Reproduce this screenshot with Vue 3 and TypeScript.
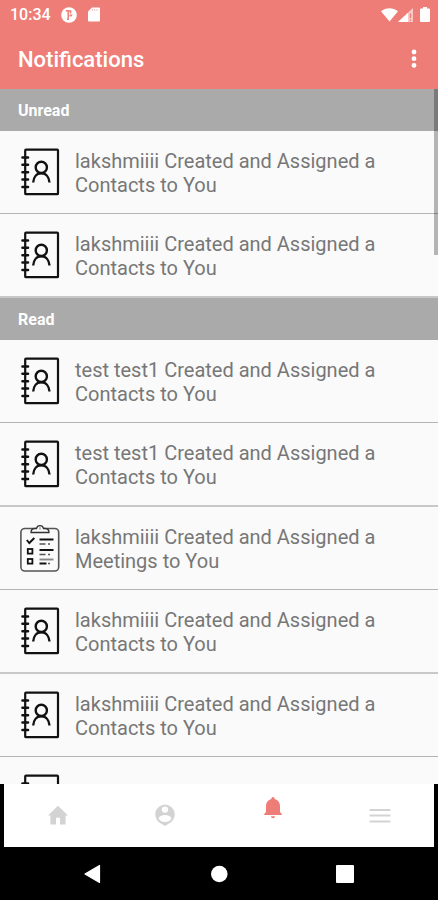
<script setup lang="ts">
type Kind = 'Contacts' | 'Meetings'

interface Notice {
  id: number
  kind: Kind
  author?: string
}

interface Section {
  title: string
  items: Notice[]
}

const sections: Section[] = [
  {
    title: 'Unread',
    items: [
      { id: 1, author: 'lakshmiiii', kind: 'Contacts' },
      { id: 2, author: 'lakshmiiii', kind: 'Contacts' },
    ],
  },
  {
    title: 'Read',
    items: [
      { id: 3, author: 'test test1', kind: 'Contacts' },
      { id: 4, author: 'test test1', kind: 'Contacts' },
      { id: 5, author: 'lakshmiiii', kind: 'Meetings' },
      { id: 6, author: 'lakshmiiii', kind: 'Contacts' },
      { id: 7, author: 'lakshmiiii', kind: 'Contacts' },
      { id: 8, kind: 'Contacts' },
    ],
  },
]
</script>

<template>
  <div class="screen">
    <header class="top">
      <div class="status">
        <span class="clock">10:34</span>
        <svg class="status-app" width="16" height="16" viewBox="0 0 16 16" aria-hidden="true">
          <circle cx="8" cy="8" r="7.800" fill="#fff" />
          <path d="M4.800 3.800h2.400v8.400H6M7 4h2.600v2.500" fill="none" stroke="#ee7d77" stroke-width="1.500" />
          <path d="M8.500 7.500h3.200l-1.200 2h-2z" fill="#ee7d77" />
        </svg>
        <svg class="status-card" width="12" height="15" viewBox="0 0 12 15" aria-hidden="true">
          <path d="M4 0.500h7a1 1 0 0 1 1 1v12a1 1 0 0 1-1 1H1a1 1 0 0 1-1-1V4.500z" fill="#fff" />
          <path d="M4.500 2v2M6.800 2v2M9 2v2" stroke="#f7c4c0" stroke-width="1" />
        </svg>
        <span class="spacer"></span>
        <svg width="17" height="14" viewBox="0 0 17 14" aria-hidden="true">
          <path d="M8.500 13.500 0 3.200C5-.9 12-.9 17 3.200z" fill="#fff" />
        </svg>
        <svg width="15" height="14" viewBox="0 0 15 14" aria-hidden="true">
          <path d="M15 0v14H0z" fill="#f8c9c6" />
          <path d="M10 4.700V14H0z" fill="#fff" />
          <path d="M12.500 5.500v4.500M12.500 11.500v1.500" stroke="#ee7d77" stroke-width="1.300" />
        </svg>
        <svg class="battery" width="10" height="15" viewBox="0 0 10 15" aria-hidden="true">
          <path d="M3 0h4v1.500h2a1 1 0 0 1 1 1V14a1 1 0 0 1-1 1H1a1 1 0 0 1-1-1V2.500a1 1 0 0 1 1-1h2z" fill="#fff" />
        </svg>
      </div>
      <div class="toolbar">
        <h1>Notifications</h1>
        <button type="button" class="more" aria-label="More options">
          <svg width="6" height="20" viewBox="0 0 6 20" aria-hidden="true">
            <circle cx="3" cy="3" r="2.400" />
            <circle cx="3" cy="9.700" r="2.400" />
            <circle cx="3" cy="16.400" r="2.400" />
          </svg>
        </button>
      </div>
    </header>

    <main class="feed">
      <section v-for="section in sections" :key="section.title">
        <h2>{{ section.title }}</h2>
        <ul>
          <li v-for="item in section.items" :key="item.id">
            <svg v-if="item.kind === 'Contacts'" class="kind" width="40" height="48" viewBox="0 0 40 48" aria-hidden="true">
              <g fill="none" stroke="#111">
                <rect x="5.200" y="1.700" width="32.800" height="44.500" rx="0.800" stroke-width="2.200" />
                <path d="M2.500 9.500H8M2.500 16.800H8M2.500 24.200H8M2.500 31.500H8M2.500 39H8" stroke-width="2.600" stroke-linecap="round" />
                <circle cx="21.300" cy="19.400" r="5.600" stroke-width="2.400" />
                <path d="M13.200 34.500c.3-5.300 3.300-9.200 8.100-9.200s7.800 3.900 8.200 9.200" stroke-width="2.400" />
              </g>
            </svg>
            <svg v-else class="kind" width="40" height="48" viewBox="0 0 40 48" aria-hidden="true">
              <rect x="0.900" y="4.500" width="37.800" height="42.500" rx="4" fill="none" stroke="#555" stroke-width="1.600" />
              <path d="M11 8.500c0-3 1-4 4-4h1.500c.8-3.800 6.200-3.800 7 0H25c3 0 4 1 4 4z" fill="#fafafa" stroke="#333" stroke-width="1.300" />
              <path d="M20 3.200v2.500" stroke="#777" stroke-width="1" />
              <g fill="none" stroke="#111">
                <path d="M6.800 16l2.500 3 5-5" stroke-width="1.900" />
                <rect x="7.800" y="25" width="4.600" height="4.600" stroke-width="1.800" />
                <rect x="7.800" y="35" width="4.600" height="4.600" stroke-width="1.800" />
                <path d="M19.500 15.500h14M19.500 26h14M19.500 39.500h7" stroke-width="1.900" />
              </g>
              <path d="M19.500 20h6M28 20h2M19.500 30.500h6M28 30.500h2M28 39.500h2" stroke="#555" stroke-width="1.300" />
              <path d="M19.500 35.500h14" stroke="#888" stroke-width="1.900" />
            </svg>
            <p v-if="item.author">{{ item.author }} Created and Assigned a {{ item.kind }} to You</p>
          </li>
        </ul>
      </section>
      <div class="thumb" aria-hidden="true"></div>
    </main>

    <nav class="tabs" aria-label="Main">
      <button type="button" aria-label="Home">
        <svg width="24" height="24" viewBox="0 0 24 24" aria-hidden="true">
          <path d="M10 20.500v-6.700h4v6.700h5.600v-9H22L12 1.700 2 11.500h2.400v9z" />
        </svg>
      </button>
      <button type="button" aria-label="Profile">
        <svg width="24" height="24" viewBox="0 0 24 24" aria-hidden="true">
          <path d="M12 0.500a10 10 0 0 0-3.200 19.400L12 22l3.200-2.100A10 10 0 0 0 12 0.500z" />
          <circle cx="12" cy="5.600" r="3.200" fill="#fff" />
          <path d="M5.500 14.500c1-2.700 4-3.500 6.500-3.500s5.500.8 6.500 3.500C17.200 17 14.700 18 12 18s-5.200-1-6.500-3.500z" fill="#fff" />
        </svg>
      </button>
      <button type="button" class="active" aria-label="Notifications" aria-current="page">
        <svg width="24" height="24" viewBox="0 0 24 24" aria-hidden="true">
          <path d="M12 1a1.700 1.700 0 0 0-1.700 1.700v.4C7 4 5 6.700 5 10v6l-1.800 2v1h17.600v-1L19 16v-6c0-3.300-2-6-5.300-6.900v-.4A1.700 1.700 0 0 0 12 1zM10 20.300h4a2 2 0 0 1-4 0z" />
        </svg>
      </button>
      <button type="button" aria-label="Menu">
        <svg width="24" height="24" viewBox="0 0 24 24" aria-hidden="true">
          <path d="M1.500 5h21v2h-21zM1.500 10.500h21v2h-21zM1.500 16.500h21v2h-21z" />
        </svg>
      </button>
    </nav>

    <div class="system">
      <button type="button" aria-label="Back">
        <svg width="18" height="20" viewBox="0 0 18 20" aria-hidden="true"><path d="M15.500 1.500v17L1 10z" stroke="#fff" stroke-width="1.200" stroke-linejoin="round" /></svg>
      </button>
      <button type="button" aria-label="Home screen">
        <svg width="18" height="18" viewBox="0 0 18 18" aria-hidden="true"><circle cx="9.300" cy="9" r="8.300" /></svg>
      </button>
      <button type="button" aria-label="Recent apps">
        <svg width="18" height="18" viewBox="0 0 18 18" aria-hidden="true"><rect width="18" height="18" rx="1" /></svg>
      </button>
    </div>
  </div>
</template>

<style>
body {
  margin: 0;
  background: #000;
}
</style>

<style scoped>
.screen {
  display: flex;
  flex-direction: column;
  height: 100vh;
  font-family: Roboto, "Liberation Sans", sans-serif;
  background: #000;
}

h1,
h2,
p,
ul {
  margin: 0;
  padding: 0;
}

button {
  display: flex;
  align-items: center;
  justify-content: center;
  padding: 0;
  border: 0;
  background: none;
}

.top {
  color: #fff;
  background: #ee7d77;
}

.status {
  display: flex;
  align-items: center;
  height: 29px;
  padding: 0 8px 0 10px;
}

.clock {
  font-size: 16px;
  font-weight: 500;
}

.status-app {
  margin-left: 10px;
}

.status-card {
  margin-left: 11px;
}

.spacer {
  flex: 1;
}

.battery {
  margin-left: 7px;
}

.toolbar {
  display: flex;
  align-items: center;
  justify-content: space-between;
  height: 60px;
  padding: 0 12px 0 18px;
}

h1 {
  font-size: 22px;
  font-weight: 500;
}

.more {
  width: 24px;
  height: 40px;
  fill: #fff;
}

.feed {
  position: relative;
  flex: 1;
  min-height: 0;
  overflow: hidden;
  background: #fafafa;
}

h2 {
  padding: 2px 18px 0;
  font-size: 16px;
  font-weight: 700;
  line-height: 40px;
  color: #fff;
  background: #aaa;
}

ul {
  list-style: none;
}

li {
  display: flex;
  align-items: center;
  gap: 15px;
  min-height: 82px;
  padding: 0 40px 0 20px;
  border-bottom: 1px solid #b4b4b4;
}

li:nth-child(even) {
  border-bottom: 2px solid #c8c8c8;
}

.kind {
  flex: none;
}

p {
  padding-top: 2px;
  font-size: 20px;
  font-weight: 400;
  line-height: 24px;
  color: #777;
}

.thumb {
  position: absolute;
  top: 0;
  right: 0;
  width: 4px;
  height: 166px;
  background: rgba(0, 0, 0, 0.28);
}

.tabs {
  display: grid;
  grid-template-columns: repeat(4, 1fr);
  height: 63px;
  margin: 0 4px;
  background: #fff;
}

.tabs button {
  fill: #d3d3d3;
}

.tabs .active {
  padding-bottom: 16px;
  fill: #ee7d77;
}

.system {
  display: flex;
  align-items: center;
  justify-content: center;
  height: 53px;
  background: #000;
}

.system button {
  width: 126px;
  height: 48px;
  fill: #fff;
}
</style>
